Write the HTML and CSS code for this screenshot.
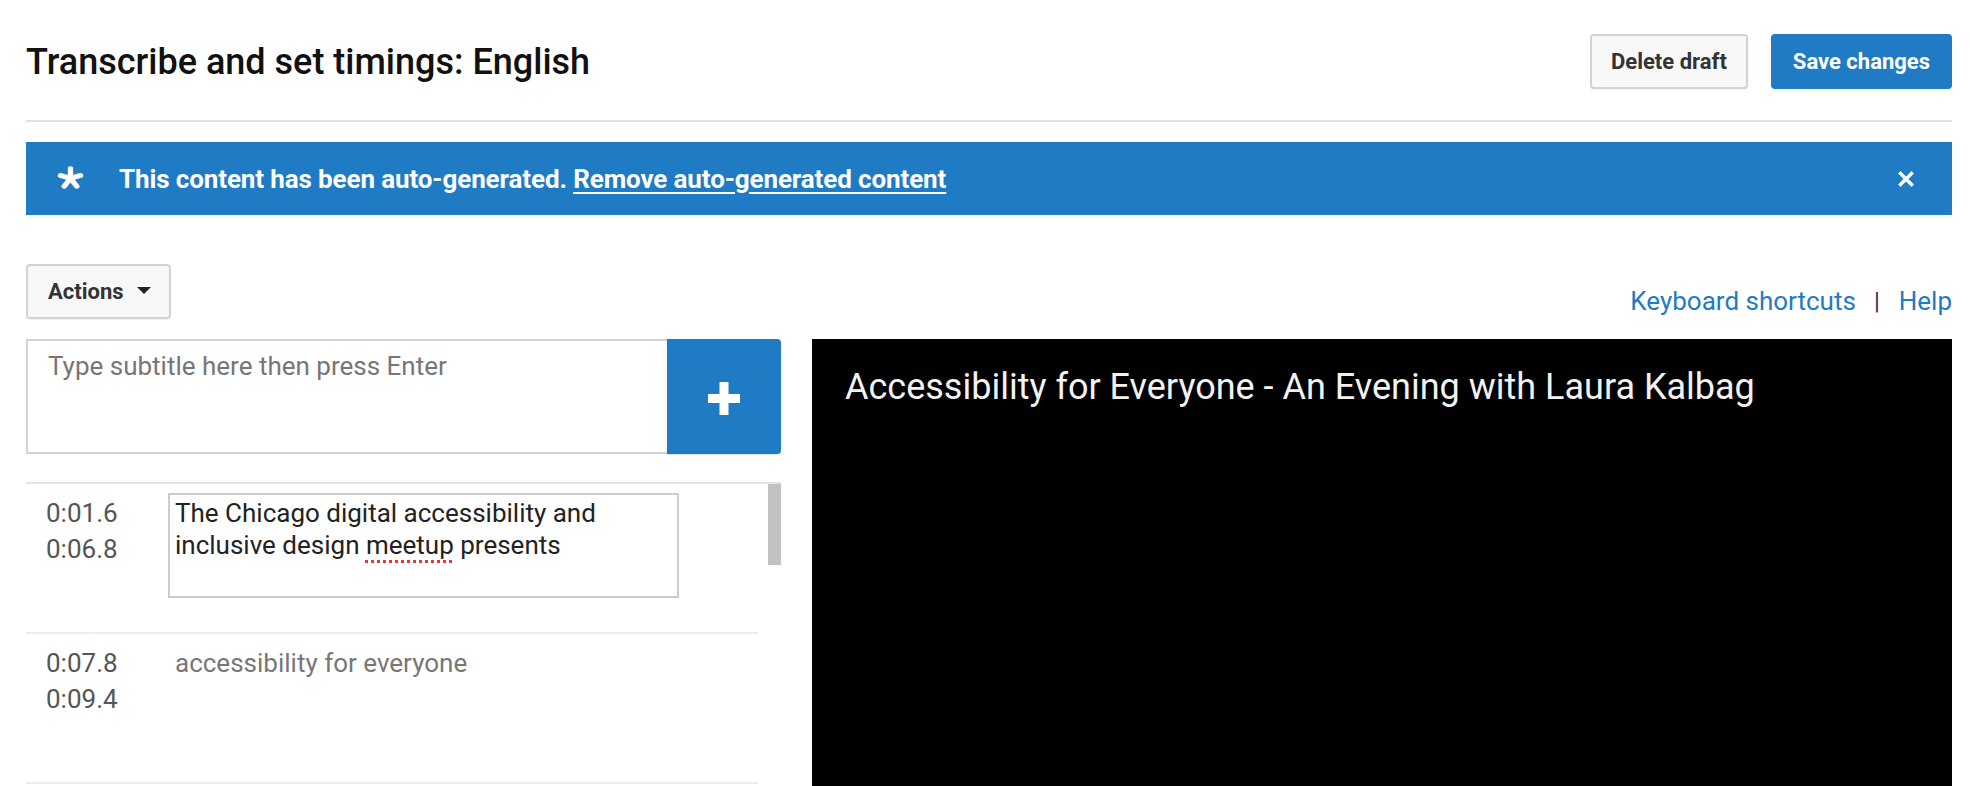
FILE: index.html
```html
<!DOCTYPE html>
<html lang="en">
<head>
<meta charset="utf-8">
<title>Transcribe and set timings: English</title>
<link rel="stylesheet" href="styles.css">
</head>
<body>
<div class="page">
  <header class="header">
    <h1 class="title">Transcribe and set timings: English</h1>
    <div class="header-actions">
      <button class="btn btn-default">Delete draft</button>
      <button class="btn btn-primary">Save changes</button>
    </div>
  </header>

  <div class="banner">
    <svg class="banner-icon" width="27" height="23" viewBox="-14 -14 28 26" preserveAspectRatio="none" aria-hidden="true">
      <g stroke="#fff" stroke-width="5.5" stroke-linecap="round">
        <line x1="0" y1="0" x2="0" y2="-11"/>
        <line x1="0" y1="0" x2="10.5" y2="-3.4"/>
        <line x1="0" y1="0" x2="-10.5" y2="-3.4"/>
        <line x1="0" y1="0" x2="6.5" y2="8.9"/>
        <line x1="0" y1="0" x2="-6.5" y2="8.9"/>
      </g>
    </svg>
    <p class="banner-text">This content has been auto-generated. <a href="#" class="banner-link">Remove auto-generated content</a></p>
    <svg class="banner-close" width="16" height="16" viewBox="0 0 16 16" aria-hidden="true">
      <path d="M2.5 2.5 L13.5 13.5 M13.5 2.5 L2.5 13.5" stroke="#fff" stroke-width="3.4" stroke-linecap="square"/>
    </svg>
  </div>

  <div class="toolbar">
    <button class="btn btn-default btn-actions">Actions <span class="caret"></span></button>
    <div class="help-links">
      <a href="#" class="link">Keyboard shortcuts</a><span class="sep">|</span><a href="#" class="link">Help</a>
    </div>
  </div>

  <div class="workspace">
    <div class="editor">
      <div class="composer">
        <textarea class="composer-input" placeholder="Type subtitle here then press Enter"></textarea>
        <button class="composer-add" aria-label="Add">
          <svg width="32" height="33" viewBox="0 0 32 33" aria-hidden="true">
            <rect x="11.5" y="0" width="9" height="33" fill="#fff"/>
            <rect x="0" y="12" width="32" height="9" fill="#fff"/>
          </svg>
        </button>
      </div>

      <div class="cue-list">
        <div class="cues">
          <div class="cue-row">
            <div class="cue-times"><span>0:01.6</span><span>0:06.8</span></div>
            <div class="cue-edit">The Chicago digital accessibility and inclusive design <span class="misspelt">meetup</span> presents</div>
          </div>
          <div class="cue-row">
            <div class="cue-times"><span>0:07.8</span><span>0:09.4</span></div>
            <div class="cue-text">accessibility for everyone</div>
          </div>
        </div>
        <div class="scrollbar"><div class="scroll-thumb"></div></div>
      </div>
    </div>

    <div class="video">
      <div class="video-title">Accessibility for Everyone - An Evening with Laura Kalbag</div>
    </div>
  </div>
</div>
</body>
</html>
```

FILE: styles.css
```css
* { box-sizing: border-box; }

html, body {
  margin: 0;
  padding: 0;
  background: #fff;
  overflow: hidden;
}

body {
  font-family: Roboto, "Liberation Sans", Arial, sans-serif;
  color: #222;
}

.page {
  padding: 0 20px 0 26px;
}

/* Header */
.header {
  display: flex;
  align-items: center;
  justify-content: space-between;
  padding: 34px 0 31px;
  border-bottom: 2px solid #e2e2e2;
}

.title {
  margin: 0;
  font-size: 36px;
  font-weight: 500;
  color: #111;
  line-height: 44px;
}

.header-actions {
  display: flex;
  gap: 23px;
}

.btn {
  font-family: Roboto, "Liberation Sans", Arial, sans-serif;
  font-size: 22px;
  font-weight: 700;
  height: 55px;
  padding: 0 19px;
  border-radius: 4px;
  cursor: pointer;
  display: inline-flex;
  align-items: center;
  white-space: nowrap;
}

.btn-default {
  background: #f8f8f8;
  color: #333;
  border: 2px solid #d3d3d3;
  box-shadow: 0 1px 1px rgba(0,0,0,0.06);
}

.btn-primary {
  background: #1f7bc3;
  color: #fff;
  border: 2px solid #1f7bc3;
  padding: 0 20px;
  justify-content: center;
}

/* Banner */
.banner {
  margin-top: 20px;
  height: 73px;
  background: #1f7bc3;
  display: flex;
  align-items: center;
  padding: 0 38px 0 31px;
}

.banner-icon {
  flex: none;
  margin-top: -2px;
}

.banner-text {
  margin: 0 0 0 35px;
  flex: 1;
  font-size: 26px;
  font-weight: 700;
  letter-spacing: -0.12px;
  color: #fff;
}

.banner-link {
  color: #fff;
  text-decoration: underline;
  text-underline-offset: 4px;
  text-decoration-thickness: 2px;
}

.banner-close {
  flex: none;
}

/* Toolbar */
.toolbar {
  display: flex;
  justify-content: space-between;
  align-items: flex-end;
  margin-top: 49px;
}

.btn-actions {
  height: 55px;
  width: 145px;
  padding: 0 0 0 20px;
}

.caret {
  display: inline-block;
  width: 0;
  height: 0;
  margin-left: 13px;
  margin-top: -2px;
  border-left: 7px solid transparent;
  border-right: 7px solid transparent;
  border-top: 7px solid #222;
}

.help-links {
  font-size: 26px;
  line-height: 30px;
  margin-bottom: 3px;
  display: flex;
  align-items: center;
}

.link {
  color: #1f7bc3;
  text-decoration: none;
}

.sep {
  color: #333;
  margin: 0 19px 0 18px;
  font-size: 24px;
}

/* Workspace */
.workspace {
  display: flex;
  gap: 31px;
  margin-top: 20px;
}

.editor {
  width: 755px;
  flex: none;
}

.composer {
  display: flex;
  height: 115px;
}

.composer-input {
  flex: 1;
  border: 2px solid #d3d3d3;
  border-right: none;
  resize: none;
  padding: 9px 20px;
  font-family: Roboto, "Liberation Sans", Arial, sans-serif;
  font-size: 26px;
  line-height: 32px;
  color: #222;
  outline: none;
  background: #fff;
}

.composer-input::placeholder {
  color: #767676;
}

.composer-add {
  width: 114px;
  flex: none;
  border: none;
  background: #1f7bc3;
  border-radius: 0 4px 4px 0;
  display: flex;
  align-items: center;
  justify-content: center;
  padding: 4px 0 0;
  box-shadow: 0 1px 1px rgba(0,0,0,0.12);
}

.cue-list {
  margin-top: 28px;
  border-top: 2px solid #e4e4e4;
  display: flex;
  justify-content: space-between;
}

.cues {
  width: 732px;
}

.cue-row {
  height: 150px;
  display: flex;
  padding: 11px 0 0 20px;
  border-bottom: 2px solid #eeeeee;
}

.cue-times {
  width: 122px;
  flex: none;
  display: flex;
  flex-direction: column;
  font-size: 26px;
  line-height: 36px;
  color: #555;
}

.cue-edit {
  margin-top: -2px;
  width: 511px;
  height: 105px;
  border: 2px solid #cccccc;
  padding: 2px 5px;
  font-size: 26px;
  line-height: 32px;
  color: #222;
}

.misspelt {
  text-decoration: underline dotted #e53935;
  text-decoration-thickness: 3px;
  text-underline-offset: 6px;
}

.cue-text {
  padding-left: 7px;
  font-size: 26px;
  line-height: 36px;
  color: #777;
}

.scrollbar {
  width: 13px;
  flex: none;
}

.scroll-thumb {
  height: 81px;
  background: #c1c1c1;
}

/* Video */
.video {
  flex: 1;
  height: 640px;
  background: #000;
  padding: 26px 33px;
}

.video-title {
  color: #f2f2f2;
  font-size: 36px;
  line-height: 44px;
}
```
